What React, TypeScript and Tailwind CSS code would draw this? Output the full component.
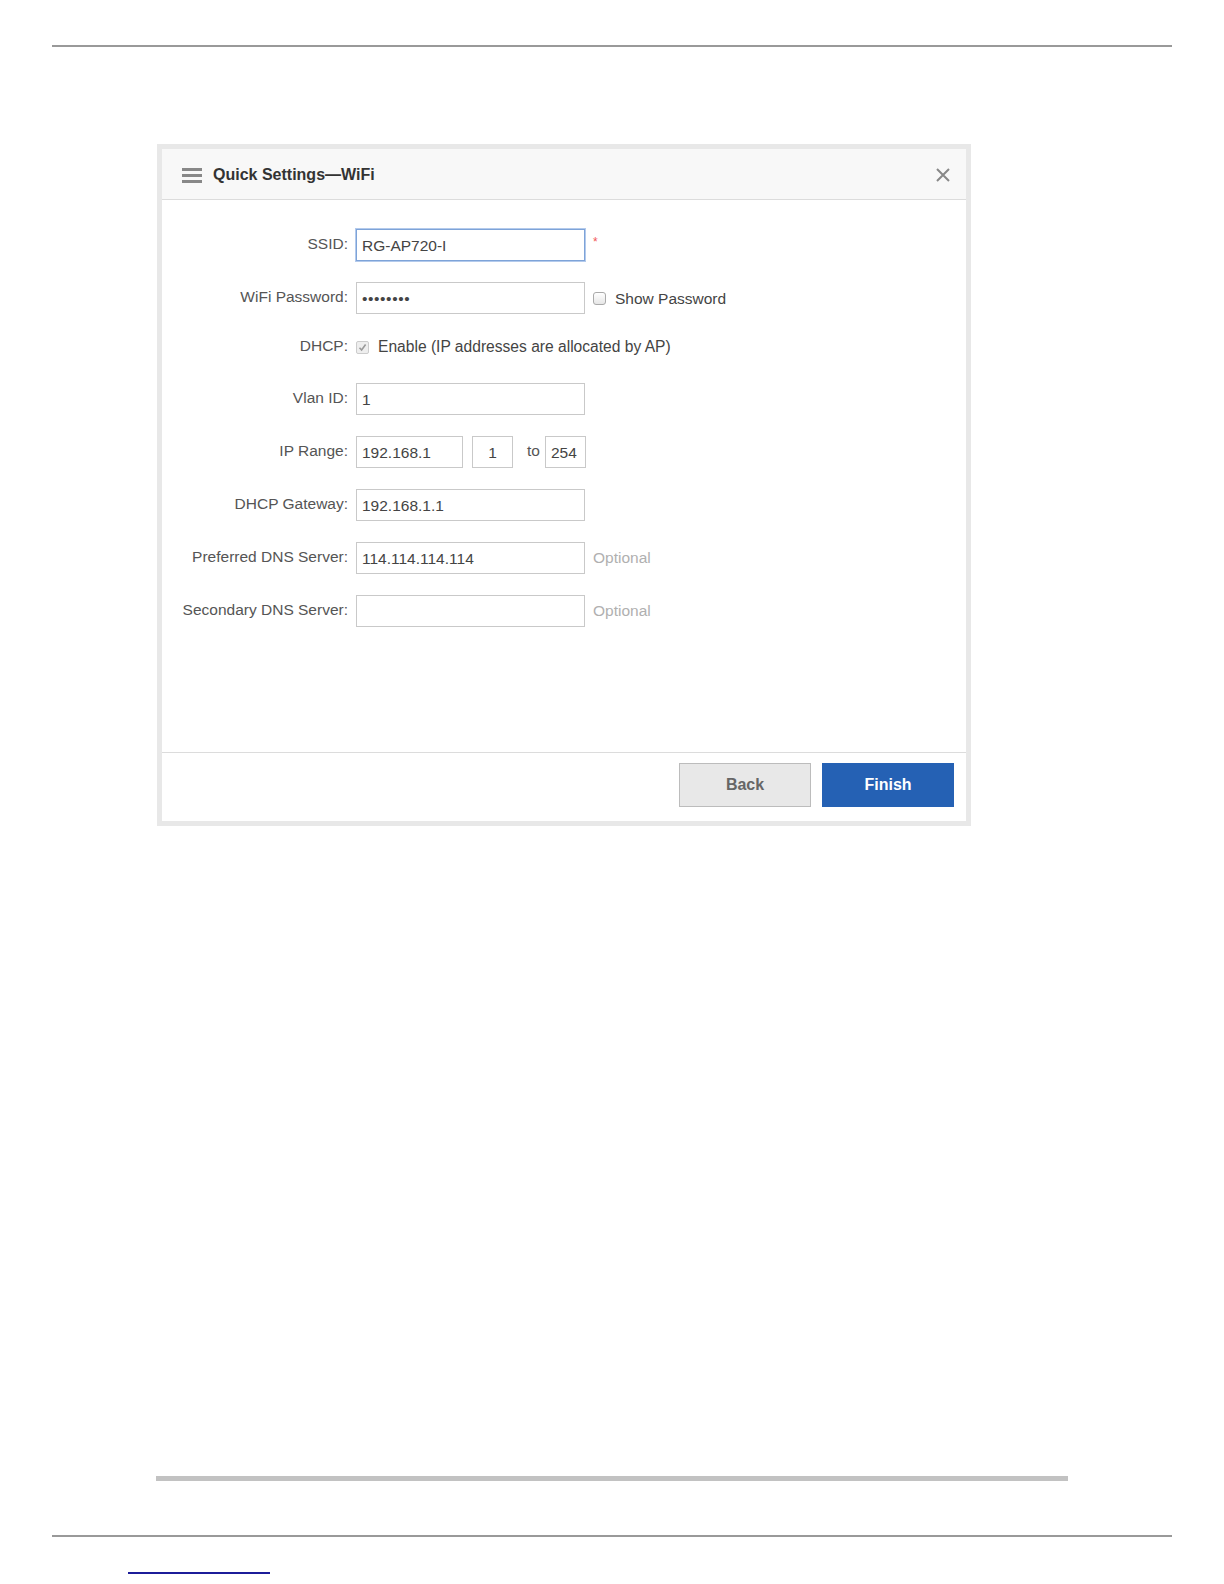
import React from "react";

const font = { fontFamily: '"Liberation Sans", Arial, sans-serif' };

function Label({ children }: { children: React.ReactNode }) {
  return (
    <div className="mr-[8px] w-[186px] shrink-0 pb-[3px] text-right text-[15.5px] text-[#555]">
      {children}
    </div>
  );
}

function Field({
  value = "",
  className = "w-[229px]",
  focus = false,
  center = false,
}: {
  value?: string;
  className?: string;
  focus?: boolean;
  center?: boolean;
}) {
  return (
    <div
      className={`flex h-[32px] shrink-0 items-center border bg-white px-[5px] pt-[2px] text-[15.5px] text-[#444] ${
        focus ? "border-[#7ea3d8] ring-1 ring-[#b3caec]" : "border-[#c9c9c9]"
      } ${center ? "justify-center" : ""} ${className}`}
    >
      {value}
    </div>
  );
}

function Optional() {
  return <span className="ml-[8px] text-[15.5px] text-[#b0b0b0]">Optional</span>;
}

export default function App() {
  return (
    <div className="flex h-[1584px] w-full flex-col overflow-hidden bg-white" style={font}>
      <div className="mx-[52px] mt-[45px] h-[2px] shrink-0 bg-[#999]" />

      {/* dialog */}
      <div className="ml-[157px] mt-[97px] h-[682px] w-[814px] shrink-0 border-[5px] border-[#e8e8e8]">
        <div className="flex h-full flex-col bg-white">
          <div className="flex h-[51px] shrink-0 items-center border-b border-[#dcdcdc] bg-[#f8f8f8] pl-[20px] pr-[15px] pt-[2px]">
            <div className="flex w-[20px] flex-col gap-[3px]">
              <span className="h-[3px] bg-[#888]" />
              <span className="h-[3px] bg-[#888]" />
              <span className="h-[3px] bg-[#888]" />
            </div>
            <span className="ml-[11px] text-[16px] font-bold text-[#333]">Quick Settings—WiFi</span>
            <svg className="ml-auto" width="16" height="16" viewBox="0 0 16 16">
              <path d="M2 2L14 14M14 2L2 14" stroke="#888" strokeWidth="2" />
            </svg>
          </div>

          <div className="flex flex-1 flex-col pt-[29px]">
            <div className="flex h-[32px] items-center">
              <Label>SSID:</Label>
              <Field value="RG-AP720-I" focus />
              <span className="ml-[8px] pb-[6px] text-[12px] text-[#f25757]">*</span>
            </div>

            <div className="mt-[21px] flex h-[32px] items-center">
              <Label>WiFi Password:</Label>
              <Field value="••••••••" className="w-[229px] text-[10px] tracking-[0.6px] text-[#333]" />
              <span className="ml-[8px] h-[13px] w-[13px] rounded-[3px] border border-[#aaa] bg-gradient-to-b from-white to-[#e6e6e6]" />
              <span className="ml-[9px] pt-[2px] text-[15.5px] text-[#444]">Show Password</span>
            </div>

            <div className="mt-[21px] flex h-[24px] items-center">
              <Label>DHCP:</Label>
              <span className="flex h-[13px] w-[13px] items-center justify-center rounded-[2px] border border-[#ccc] bg-[#eee]">
                <svg width="9" height="9" viewBox="0 0 9 9">
                  <path d="M1.5 4.8L3.6 7L7.6 1.6" fill="none" stroke="#999" strokeWidth="1.6" />
                </svg>
              </span>
              <span className="ml-[9px] text-[15.6px] text-[#444]">Enable (IP addresses are allocated by AP)</span>
            </div>

            <div className="mt-[24px] flex h-[32px] items-center">
              <Label>Vlan ID:</Label>
              <Field value="1" />
            </div>

            <div className="mt-[21px] flex h-[32px] items-center">
              <Label>IP Range:</Label>
              <Field value="192.168.1" className="w-[107px]" />
              <Field value="1" className="ml-[9px] w-[41px]" center />
              <span className="ml-[14px] mr-[5px] pb-[3px] text-[15.5px] text-[#555]">to</span>
              <Field value="254" className="w-[41px]" />
            </div>

            <div className="mt-[21px] flex h-[32px] items-center">
              <Label>DHCP Gateway:</Label>
              <Field value="192.168.1.1" />
            </div>

            <div className="mt-[21px] flex h-[32px] items-center">
              <Label>Preferred DNS Server:</Label>
              <Field value="114.114.114.114" />
              <Optional />
            </div>

            <div className="mt-[21px] flex h-[32px] items-center">
              <Label>Secondary DNS Server:</Label>
              <Field />
              <Optional />
            </div>
          </div>

          <div className="flex h-[69px] shrink-0 justify-end gap-[11px] border-t border-[#dcdcdc] pr-[12px] pt-[10px]">
            <button className="h-[44px] w-[132px] border border-[#bcbcbc] bg-[#e8e8e8] text-[16px] font-bold text-[#666]">
              Back
            </button>
            <button className="h-[44px] w-[132px] bg-[#2561b4] text-[16px] font-bold text-white">
              Finish
            </button>
          </div>
        </div>
      </div>

      <div className="ml-[156px] mt-[650px] h-[5px] w-[912px] shrink-0 bg-[#c2c2c2]" />
      <div className="mx-[52px] mt-[54px] h-[2px] shrink-0 bg-[#999]" />
      <div className="ml-[128px] mt-[35px] h-[2px] w-[142px] shrink-0 bg-[#1c1c99]" />
    </div>
  );
}
